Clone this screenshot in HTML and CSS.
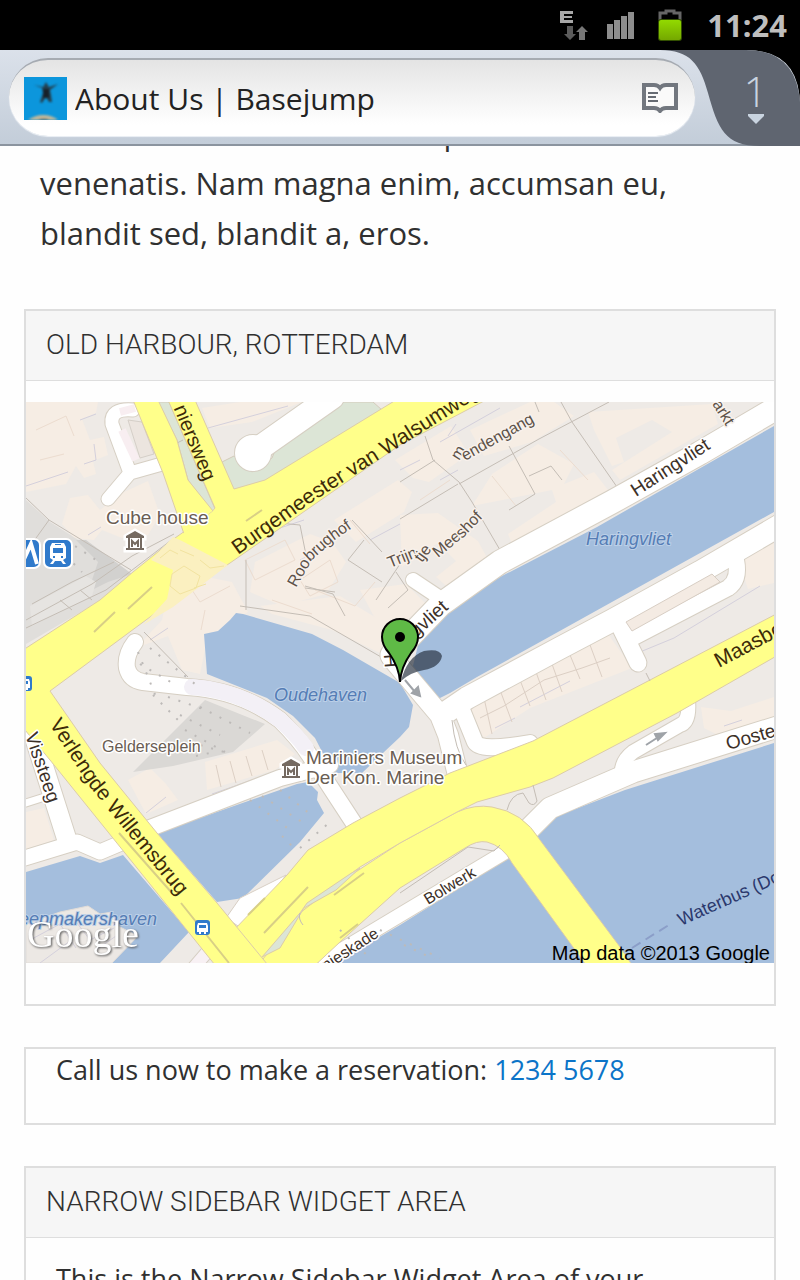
FILE: index.html
```html
<!DOCTYPE html>
<html lang="en">
<head>
<meta charset="utf-8">
<meta name="viewport" content="width=device-width, initial-scale=1">
<title>About Us | Basejump</title>
<link rel="stylesheet" href="styles.css">
</head>
<body>
<div class="screen">
  <div class="status">
    <svg class="status-edge" width="30" height="32" viewBox="0 0 30 32" aria-hidden="true">
      <path d="M1 2h13v3H5v2h8v2H5v2h9v3H1z" fill="#a8a8a8"/>
      <path d="M8 17h6v8h3l-6 6-6-6h3z" fill="#5c5c5c"/>
      <path d="M20 31h6v-8h3l-6-6-6 6h3z" fill="#777"/>
    </svg>
    <svg class="status-signal" width="28" height="28" viewBox="0 0 28 28" aria-hidden="true">
      <path d="M0 13h6v15H0zM7 9h6v19H7zM14 5h6v23h-6zM21 1h6v27h-6z" fill="#8d8d8d"/>
    </svg>
    <svg class="status-battery" width="26" height="34" viewBox="0 0 26 34" aria-hidden="true">
      <defs><linearGradient id="charge" x1="0" y1="0" x2="0" y2="1"><stop offset="0" stop-color="#92da00"/><stop offset="1" stop-color="#74a800"/></linearGradient></defs>
      <path d="M3 12V5h6V3h8v2h6v7" fill="none" stroke="#666" stroke-width="3"/>
      <rect x="1" y="11" width="24" height="22" rx="3" fill="#335000"/>
      <rect x="2" y="12" width="22" height="20" rx="2" fill="url(#charge)"/>
    </svg>
    <time class="clock">11:24</time>
  </div>

  <header class="toolbar">
    <button class="address" type="button">
      <svg class="favicon" viewBox="0 0 43 43" aria-hidden="true">
        <rect width="43" height="43" fill="#0c96dc"/>
        <g class="favicon-soft">
          <path d="M10 8l9 2 3-5 3 5 9-3-8 6 1 5 1 7h-3l-3-5-4 6-2-1 3-9-1-5z" fill="#24404f"/>
          <path d="M19 12h6v9h-6z" fill="#17212a"/>
          <path d="M4 43q7-5 15-5 9 0 15 5z" fill="#c3b899"/>
          <path d="M14 43q4-2 9-1l2 1z" fill="#6d6355"/>
        </g>
      </svg>
      <span class="address-title">About Us | Basejump</span>
      <svg class="reader" width="36" height="30" viewBox="0 0 36 30" aria-hidden="true">
        <path d="M2 2h10q4 0 6 3 2-3 6-3h10v23H24q-4 0-6 3-2-3-6-3H2z" fill="#fafafa" stroke="#72777f" stroke-width="4"/>
        <path d="M6 10h10M6 14h8M6 18h10" stroke="#666b73" stroke-width="2"/>
      </svg>
    </button>
    <button class="tabs" type="button" aria-label="1 open tab">
      <svg class="tabs-shape" width="140" height="96" viewBox="0 0 140 96" aria-hidden="true">
        <path d="M86 0Q140 0 140 56V0z" fill="#000"/>
        <path d="M0 0C30 0 40 14 48 43 58 79 65 96 100 96H140V52Q136 0 86 0z" fill="#5f6570"/>
      </svg>
      <span class="tabs-count">1</span>
      <svg class="tabs-arrow" width="18" height="11" viewBox="0 0 18 11" aria-hidden="true"><path d="M1 1h16v2l-8 8-8-8z" fill="#c9d4e0"/></svg>
    </button>
  </header>

  <main class="page">
    <p class="intro">Donec a massa ac urna semper<br>venenatis. Nam magna enim, accumsan eu, blandit sed, blandit a, eros.</p>

    <section class="widget">
      <h2 class="widget-title">Old Harbour, Rotterdam</h2>
      <div class="map-wrap">
        <svg class="map" viewBox="26 402 748 561" role="img" aria-label="Map of the Old Harbour in Rotterdam">
          <rect x="26" y="402" width="748" height="561" fill="#eeeae6"/>

          <g fill="#f6ede4">
            <path d="M26 402H98L96 413 82 419 90 440 104 437 108 455 93 461 96 474 84 478 76 466 66 484 26 492z"/>
            <path d="M70 498l18 -3 12 15 22 -17 26 -12 12 34 -12 20 -26 3 -20 -8 -8 10 -20 -2 -12 -14z"/>
            <path d="M128 420l14 2 12 32 -14 4z" fill="#ece5df" stroke="#d5cfc8"/>
            <path d="M240 402h62l-50 20 -42 6 -8 -20z"/>
            <path d="M255 562l55 -28 22 8 14 20 -20 32 -44 12 -32 -14z"/>
            <path d="M334 520l64 -40 14 12 -8 20 -48 30z"/>
            <path d="M395 460l56 -34 18 28 -40 28 -16 -4z"/>
            <path d="M470 430l60 -28h24l20 14 -42 26 -48 14z"/>
            <path d="M588 412l124 -8 6 20 -98 56 -8 -10 60 -38 -20 -12 -36 18 8 24 -12 4 -18 -36z"/>
            <path d="M472 506l20 -32 46 -30 36 20 -10 20 30 -12 14 18 -96 54 -4 -10 48 -32 -4 -12z"/>
            <path d="M400 515l38 -2 40 28 14 26 -40 24 -16 -14 20 -16 -18 -18 -36 24z"/>
            <path d="M360 590l46 -6 20 20 -26 22 -18 6z"/>
            <path d="M172 570l60 12 16 30 -28 18 -12 4 -8 40 -18 -4 -14 -34 -32 12 26 -28z"/>
            <path d="M260 606l80 -10 50 30 -8 28 -50 -24 -60 -16z"/>
            <path d="M128 780l22 -12 16 16 12 16 -32 14z"/>
            <path d="M205 762l72 -22 18 14 -20 16 -68 20z"/>
            <path d="M26 812l18 -4 10 32 -28 9z"/>
            <path d="M468 709l140 -75 24 34 -102 40 -46 30z"/>
            <path d="M740 560l20 -14 14 -8v45l-26 6 -4 -12z"/>
            <path d="M701 707l30 4 43 -14v21l-58 16 -12 -6z"/>
          </g>

          <g fill="#dad8d5">
            <path d="M133 772l72 -72 60 24 -32 28 -60 14z"/>
            <path d="M26 500l24 22 60 38 24 16 -36 26 -72 42z" opacity=".7"/>
            <path d="M76 540l22 22 -10 30 20 -10 24 -8 -46 -34z" fill="#d2d1cf"/>
          </g>
          <path d="M30 606l56 -30 10 6 -4 14 -60 30z" fill="#e6e4e1"/>
          <path d="M26 498l23 22 82 50M49 520l-23 32M26 628l80 -38 68 -52M32 604l40 -22 42 -20M80 590l12 10M60 600l12 10M26 620l66 -36 40 -28 42 -22" class="lane"/>

          <g class="bldg">
            <path d="M26 486l42 -14M84 464l12 -4 -2 -16M80 420l16 -6M208 428l80 -22M88 535l13 -8M440 442l60 -34M440 480l18 -10M448 436l8 -12M400 470l20 -10M280 528l24 -8M150 640l18 -12M175 810l22 -6M212 794l40 -14M28 851l28 -8M146 813l20 -16M510 545l80 -42M455 588l24 -12M640 652l34 -14 86 -52M495 728l20 -10M520 707l50 -26M724 726l18 -6M300 560l28 -14M370 540l30 -16M640 482l40 -22"/>
            <path d="M484 698l8 36M500 690l12 32M520 680l10 26M536 672l10 28M552 664l10 28M570 655l10 24M590 645l12 32M216 765l5 22M230 761l6 22M246 756l6 20M262 750l6 20M480 718l24 -12 40 -26 38 -12 28 -10" stroke="#dccfc4"/>
            <path d="M245 560l40 -20 10 20 -40 20zM300 580l30 -20 8 22 -28 14zM180 572l20 30 30 -16M205 610l-4 20M272 600l40 14M420 500l30 -20M492 476l24 30M560 450l28 30M315 590l40 16 20 -24M36 430l30 -14 8 20M40 460l24 -6M350 520l20 24" stroke="#ecdccf"/>
          </g>
          <path d="M246 520l54 5M246 560v50M300 525l6 30M425 436l8 24 26 22 13 20 28 48M459 484l80 -45 70 -37M400 519l58 -35M435 460l-35 22M535 402l4 10M561 402l11 20 45 65M509 446l26 48 -26 16M529 476l22 -10 11 14M240 606l70 10 78 45M305 586l28 8 12 22M144 632l44 45M388 608l20 -18 -12 -18M352 520l30 32M376 600l24 -36M305 588l30 4M364 540l-16 20 34 22" class="lane"/>

          <g fill="#a4bedd">
            <path d="M774 426L597 527 500 577 443 613 420 637 412 670 438 699 450 693 477 677 774 512z"/>
            <path d="M204 634l14 -3 12 -11 6 -7 7 1 69 20 31 16 57 33 13 22 -4 22 -9 10 -17 16 -21 20h-29l-18 -35 -22 -22 -26 -18 -60 -24z"/>
            <path d="M157 833l140 -49 11 -2 10 10 -1 8 7 13 -24 29 -57 56 -26 4z"/>
            <path d="M26 872l54 -16 20 7 23 -8 66 77 -29 31H26z"/>
            <path d="M774 743L625 790 552 818 537 835 507 858 400 925 335 963H774z"/>
          </g>
          <path d="M26 924l34 -12 28 -6 12 8 12 -2 6 14 20 10 -26 27H26z" fill="#ece8e4" stroke="#e0dcd8"/>
          <path d="M30 940l30 -16 16 24M70 914l20 26 24 -12M96 950l20 -14M40 963l30 -22" class="bldg"/>
          <path d="M163 963l26 -30 26 30z" fill="#eeeae6"/>

          <g fill="#dce5d6" stroke="#d3cbbb">
            <path d="M158 402h11l46 107 -3 3 -24 -32 -11 -40z"/>
            <path d="M222 462l12 -6 18 16 20 -14 8 -20 56 -36h37l9 8 -117 72 -33 8z"/>
          </g>
          <path d="M177 443l6 -3" class="lane"/>

          <g class="casing">
            <path d="M133 410Q110 408 112 424L130 473 108 499M130 473l32 -9" stroke-width="15"/>
            <path d="M258 449L332 397" stroke-width="26"/>
            <circle cx="253" cy="453" r="9" stroke-width="20"/>
            <path d="M790 400L700 453 612 502 500 562 440 605 392 655" stroke-width="25"/>
            <path d="M413 580l30 20" stroke-width="16"/>
            <path d="M392 658L440 715 448 735 458 775" stroke-width="22"/>
            <path d="M784 523L700 572 613 620 560 648 467 698 442 715" stroke-width="24"/>
            <path d="M462 710L475 742Q480 752 530 743" stroke-width="18"/>
            <path d="M617 620L638 663" stroke-width="19"/>
            <path d="M632 638L728 588Q740 580 736 560" stroke-width="18"/>
            <path d="M790 723L633 772 550 808 530 828 522 838" stroke-width="23"/>
            <path d="M688 700Q690 722 680 725L633 752Q620 762 622 777" stroke-width="16"/>
            <path d="M512 848L400 915 325 960" stroke-width="16"/>
            <path d="M135 642Q125 655 127 668 130 680 143 682L187 687Q240 690 280 720 300 740 310 756L355 825" stroke-width="18"/>
            <path d="M145 830L280 778 330 765" stroke-width="18"/>
            <path d="M33 733L67 840" stroke-width="21"/>
            <path d="M18 860L77 842 100 852 140 835" stroke-width="17"/>
            <path d="M26 803l25 -8" stroke-width="9"/>
            <path d="M190 972l24 -28" stroke-width="14"/>
          </g>
          <g class="street">
            <path d="M133 410Q110 408 112 424L130 473 108 499M130 473l32 -9" stroke-width="13"/>
            <path d="M258 449L332 397" stroke-width="24"/>
            <circle cx="253" cy="453" r="9" stroke-width="18"/>
            <path d="M790 400L700 453 612 502 500 562 440 605 392 655" stroke-width="23"/>
            <path d="M413 580l30 20" stroke-width="14"/>
            <path d="M392 658L440 715 448 735 458 775" stroke-width="20"/>
            <path d="M784 523L700 572 613 620 560 648 467 698 442 715" stroke-width="22"/>
            <path d="M462 710L475 742Q480 752 530 743" stroke-width="16"/>
            <path d="M617 620L638 663" stroke-width="17"/>
            <path d="M632 638L728 588Q740 580 736 560" stroke-width="16"/>
            <path d="M790 723L633 772 550 808 530 828 522 838" stroke-width="21"/>
            <path d="M688 700Q690 722 680 725L633 752Q620 762 622 777" stroke-width="14"/>
            <path d="M512 848L400 915 325 960" stroke-width="14"/>
            <path d="M135 642Q125 655 127 668 130 680 143 682L187 687Q240 690 280 720 300 740 310 756L355 825" stroke-width="16"/>
            <path d="M145 830L280 778 330 765" stroke-width="16"/>
            <path d="M33 733L67 840" stroke-width="19"/>
            <path d="M18 860L77 842 100 852 140 835" stroke-width="15"/>
            <path d="M26 803l25 -8" stroke-width="7"/>
            <path d="M190 972l24 -28" stroke="#f8f1f4" stroke-width="12"/>
            <path d="M192 687Q240 690 280 720 296 734 306 748" stroke="#f3f0f6" stroke-width="16"/>
          </g>
          <circle cx="253" cy="453" r="4" fill="#fff"/>
          <path d="M120 412l15 -4M122 430l14 30" stroke="#f8eef1" stroke-width="8"/>
          <path d="M626 622l86 -48 8 8 -88 49z" fill="#f4ebe3" stroke="#d8cec4"/>
          <path d="M226 918l14 -20 46 -23 -42 55z" fill="#fff" stroke="#d8cfc4"/>

          <g class="major">
            <path d="M457 812Q475 804 492 807 523 812 540 840L620 947 632 965H586L512 863Q503 846 487 842 477 840 465 848L400 888 340 942 310 970H225L290 915 400 843z"/>
            <path d="M780 612L650 680 533 741 450 773 400 798 353 823 308 850 287 875 232 932 263 959 300 913 333 887 360 867 400 843 457 812 477 802 530 787 553 778 677 713 780 654z"/>
            <path d="M262 957l38 -44 7 -10 43 -29 10 -6 -24 22 -32 18 -24 40z" fill="#dce5d6"/>
            <path d="M20 652L100 600 133 572 175 538 212 512 215 508 168 400H195L234 489 265 480 396 400H486L400 445 230 563 173 600 50 691 100 763 157 833 217 903 272 970H219L133 863 50 760 20 724z"/>
            <path d="M133 400H158L177 440 188 480 213 511 184 534 163 473z"/>
            <path d="M212 512l20 -20 -8 34 -44 20 -6 -6z" stroke="none"/>
          </g>
          <path d="M151 560l22 -23 9 4 46 24 -55 42 -30 18 24 -26 6 -29z" fill="#fbf0c0"/>
          <path d="M172 574l12 -8 16 10 -4 12 -16 6 -10 -8zM200 560l10 8 14 -2M180 550l14 6M194 588l12 -4M160 558l10 -8 8 4" fill="none" stroke="#f2e3a0"/>

          <g class="mark">
            <path d="M94 632l21 -20M128 609l24 -22M246 521l16 -11M119 833l53 60M181 903l48 60M264 933l44 -46M248 915l17 -17M334 895l30 -22M340 938l18 -14"/>
          </g>
          <path d="M507 810q4 -16 16 -17l6 10q5 4 8 -2l-4 -16M400 893l68 -46 26 4 6 -6M300 913q-2 6 3 12M646 673l4 8M452 720q3 30 14 45" class="lane"/>
          <g stroke="#9fa3a8" stroke-width="2" fill="#9fa3a8">
            <path d="M405 680l10 12M646 745l14 -9"/>
            <path d="M420 696l-8 -3 6 -6zM665 733l-7 7 -3 -6z"/>
          </g>
          <g class="dots">
            <path d="M138 652l20 50M150 648l50 40M140 664l34 20M153 695l28 28M168 697l35 12M180 715l40 20M185 730l40 22M200 707l50 26M190 742l34 10M196 756l18 -4"/>
            <path d="M250 800l40 30M262 796l46 30M280 790l30 24M300 848l30 -26M282 836l12 12M340 930l30 28M380 930l60 28M404 945l30 14M58 548l24 24M66 540l30 20"/>
          </g>
          <path d="M632 948l40 -25" stroke="#8b9ec8" stroke-width="2" stroke-dasharray="10 6"/>

          <defs>
            <path id="p-hiers" d="M168 395L204 482"/>
            <path id="p-burg" d="M238 555L315 500 510 377"/>
            <path id="p-roo" d="M296 588L312 560 332 542 372 514"/>
            <path id="p-ver" d="M49 724L90 787 135 843 200 922"/>
            <path id="p-har" d="M416 638l54 -48"/>
            <path id="p-vis" d="M25 735L56 826"/>
          </defs>
          <g class="road-text">
            <text text-anchor="end"><textPath href="#p-hiers" startOffset="100%">niersweg</textPath></text>
            <text class="road-large"><textPath href="#p-burg">Burgemeester van Walsumweg</textPath></text>
            <text class="road-large"><textPath href="#p-ver">Verlengde Willemsbrug</textPath></text>
            <text class="road-large" transform="translate(719 668) rotate(-28)">Maasboulevard</text>
          </g>
          <g class="street-text">
            <text transform="translate(636 497) rotate(-33)">Haringvliet</text>
            <text><textPath href="#p-har">gvliet</textPath></text>
            <text transform="translate(398 667) rotate(-95)">H</text>
            <text><textPath href="#p-vis">Vissteeg</textPath></text>
            <text transform="translate(728 750) rotate(-16)">Oosterkade</text>
            <text class="small" transform="translate(428 905) rotate(-31)">Bolwerk</text>
            <text class="small" transform="translate(326 971) rotate(-33)">nieskade</text>
          </g>
          <g class="lane-text">
            <text><textPath href="#p-roo">Roobrughof</textPath></text>
            <text transform="translate(390 568) rotate(-22)">Trijn</text>
            <text transform="translate(422 563) rotate(-54)">tje</text>
            <text transform="translate(438 558) rotate(-40)">Mee</text>
            <text transform="translate(462 539) rotate(-46)">shof</text>
            <text transform="translate(459 461) rotate(-58)">m</text>
            <text transform="translate(465 461) rotate(-29)">endengang</text>
            <text transform="translate(712 404) rotate(58)">arkt</text>
          </g>
          <g class="water-text">
            <text x="586" y="545">Haringvliet</text>
            <text x="274" y="701">Oudehaven</text>
            <text x="157" y="925" text-anchor="end">Scheepmakershaven</text>
          </g>
          <text class="ferry-text" transform="translate(681 926) rotate(-24)">Waterbus (Dordrecht)</text>
          <g class="place-text">
            <text x="106" y="524">Cube house</text>
            <text class="small" x="102" y="752">Gelderseplein</text>
            <text x="306" y="764">Mariniers Museum</text>
            <text x="306" y="784">Der Kon. Marine</text>
          </g>

          <g id="museum">
            <path d="M125 536l10 -6 10 6v3h-2v9h2v3h-20v-3h2v-9h-2z" fill="#fff" stroke="#fff" stroke-width="3"/>
            <path d="M126 536l9 -5 9 5v2h-18zM126 548h18v2h-18zM128 538h2v10h-2zM140 538h2v10h-2z" fill="#756a61"/>
            <path d="M132 547v-6l3 3 3 -3v6" fill="none" stroke="#756a61" stroke-width="2"/>
          </g>
          <use href="#museum" x="156" y="228"/>

          <g id="metro">
            <rect x="11" y="539" width="29" height="29" rx="6" fill="#307acb" stroke="#fff" stroke-width="2"/>
            <path d="M16 564l6 -20 3 13 6 -13 6 20" fill="none" stroke="#fff" stroke-width="4"/>
            <rect x="44" y="539" width="28" height="29" rx="6" fill="#307acb" stroke="#fff" stroke-width="2"/>
            <path d="M52 543h12l2 4v11l-3 2 3 4h-3l-2 -3h-6l-2 3h-3l3 -4 -3 -2v-11z" fill="#fff"/>
            <path d="M53 548h10v5H53zM53 556h2v2h-2zM61 556h2v2h-2zM55 544h6v1h-6z" fill="#307acb"/>
          </g>
          <g id="stop">
            <rect x="195" y="920" width="15" height="15" rx="3" fill="#307acb"/>
            <path d="M198 923h9l1 3v6h-2v2h-2v-2h-3v2h-2v-2h-2v-6z" fill="#fff"/>
            <path d="M199 925h7v3h-7z" fill="#307acb"/>
          </g>
          <use href="#stop" x="-178" y="-244"/>

          <path d="M401 681Q407 657 424 651 440 648 442 656 440 667 424 670 411 672 401 681z" fill="#263040" opacity=".68"/>
          <path d="M400 682Q399 667 389 653 382 645 382 637A18 18 0 0 1 418 637Q418 645 411 653 401 667 400 682z" fill="#5fba46" stroke="#000" stroke-width="2"/>
          <circle cx="400" cy="637" r="5" fill="#000"/>

          <text class="logo-text" x="27" y="947">Google</text>
          <text class="copy-text" x="770" y="960">Map data ©2013 Google</text>
        </svg>
      </div>
    </section>

    <section class="widget widget-call">
      <p class="call">Call us now to make a reservation: <a class="phone" href="tel:12345678">1234 5678</a></p>
    </section>

    <section class="widget">
      <h2 class="widget-title">Narrow Sidebar Widget Area</h2>
      <p class="widget-text">This is the Narrow Sidebar Widget Area of your</p>
    </section>
  </main>
</div>
</body>
</html>
```

FILE: styles.css
```css
* { box-sizing: border-box; }
body {
  margin: 0;
  background: #fefefe;
  color: #303030;
  font-family: "Open Sans", "Noto Sans", sans-serif;
}
.screen {
  display: flex;
  flex-direction: column;
  height: 100vh;
  overflow: hidden;
}
.status {
  flex: none;
  display: flex;
  align-items: center;
  justify-content: flex-end;
  height: 50px;
  padding-right: 13px;
  background: #000;
}
.status-signal { margin: 0 22px 0 18px; }
.clock {
  margin-left: 24px;
  color: #bebebe;
  font-family: "Noto Sans", sans-serif;
  font-size: 31px;
  font-weight: 700;
}
.toolbar {
  position: relative;
  z-index: 1;
  flex: none;
  display: flex;
  align-items: center;
  height: 96px;
  padding-left: 9px;
  border-bottom: 2px solid #8b949f;
  background: linear-gradient(#dbe1ea, #c3cdd9);
}
.address {
  position: relative;
  z-index: 1;
  flex: 1;
  display: flex;
  align-items: center;
  gap: 8px;
  min-width: 0;
  height: 78px;
  padding: 0 17px 0 15px;
  border: 0;
  border-top: 2px solid #a6abb2;
  border-radius: 39px;
  background: linear-gradient(#e4e4e4, #fff 85%);
  box-shadow: 0 1px 1px #eef2f7;
  color: #222;
  font: inherit;
  font-size: 30px;
  text-align: left;
}
.favicon { flex: none; width: 43px; height: 43px; }
.favicon-soft { filter: blur(1px); }
.address-title {
  flex: 1;
  overflow: hidden;
  white-space: nowrap;
}
.reader { flex: none; }
.tabs {
  flex: none;
  display: flex;
  flex-direction: column;
  align-items: center;
  width: 105px;
  height: 96px;
  padding: 20px 0 0 16px;
  border: 0;
  background: none;
  color: #c9d4e0;
  font: inherit;
  font-size: 42px;
  font-weight: 300;
  line-height: 44px;
}
.tabs-shape { position: absolute; top: 0; right: 0; }
.tabs-count, .tabs-arrow { position: relative; }
.page {
  flex: 1;
  min-height: 0;
  overflow: hidden;
  padding: 0 24px;
}
.intro {
  margin: -38px 0 51px;
  padding: 0 16px;
  font-size: 31px;
  line-height: 50px;
}
.widget {
  margin-bottom: 41px;
  border: 2px solid #dedede;
}
.widget-title {
  margin: 0;
  padding: 13px 20px 15px;
  border-bottom: 1px solid #dedede;
  background: #f6f6f6;
  font-family: Roboto, sans-serif;
  font-size: 28px;
  font-weight: 300;
  line-height: 41px;
  text-transform: uppercase;
}
.map-wrap { padding: 21px 0 41px; }
.map { display: block; width: 100%; height: auto; }
.widget-call { min-height: 78px; }
.call, .widget-text {
  margin: 0;
  padding: 0 30px;
  font-size: 27px;
  line-height: 42px;
}
.widget-text { padding-top: 20px; }
.phone { color: #0b74c8; text-decoration: none; }

.lane { fill: none; stroke: #c4bdb5; stroke-width: 1; }
.bldg { fill: none; stroke: #d4d0dc; stroke-width: 1; }
.casing { fill: none; stroke: #d6cfc3; stroke-linecap: round; stroke-linejoin: round; }
.street { fill: none; stroke: #fff; stroke-linecap: round; stroke-linejoin: round; }
.major { fill: #ffff8a; stroke: #dccca8; stroke-width: 1; }
.mark { fill: none; stroke: #d8cf86; stroke-width: 2; }
.dots { fill: none; stroke: #bdbab8; stroke-width: 2; stroke-dasharray: 2 9; }
.map text { font-family: "Liberation Sans", Arial, sans-serif; font-size: 19px; }
.map .small { font-size: 16px; }
.map .road-text text { font-size: 20px; }
.map .road-text .road-large { font-size: 21px; }
.road-text { fill: #3c2a08; }
.street-text, .lane-text, .place-text {
  fill: #3c3028;
  stroke: #fff;
  stroke-width: 3px;
  stroke-linejoin: round;
  paint-order: stroke;
}
.lane-text { fill: #5c5148; stroke: #f8f1ec; }
.map .lane-text text { font-size: 16px; }
.place-text { fill: #6a5d53; }
.water-text { fill: #557db5; font-style: italic; stroke: #bcd0e8; stroke-width: 2px; paint-order: stroke; }
.map .water-text text { font-size: 18px; }
.map .ferry-text { fill: #2b386c; font-size: 18px; }
.map .logo-text {
  fill: #fff;
  font-family: "Liberation Serif", serif;
  font-size: 38px;
  filter: drop-shadow(1px 1px 1px #555);
}
.map .copy-text { fill: #000; font-size: 20px; text-anchor: end; }
```
